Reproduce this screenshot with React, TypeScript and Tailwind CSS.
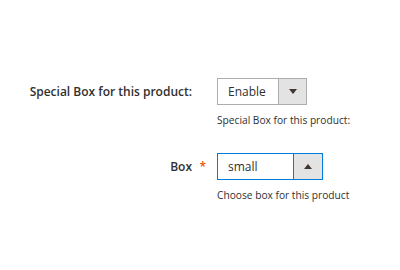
import React from "react";

const Arrow = ({ up }: { up?: boolean }) => (
  <svg width="8" height="5" viewBox="0 0 8 5" className="block">
    {up ? <path d="M0 5 L4 0 L8 5 Z" fill="#41362f" /> : <path d="M0 0 L8 0 L4 5 Z" fill="#41362f" />}
  </svg>
);

export default function App() {
  return (
    <div className="w-[400px] h-[270px] bg-white text-[#303030] font-['Open_Sans',sans-serif]">
      <div className="pt-[78px] flex flex-col gap-[26px]">
        {/* row 1 */}
        <div className="flex">
          <div className="w-[192px] h-[27px] flex items-center justify-end font-semibold text-[12px]">
            Special Box for this product:
          </div>
          <div className="ml-[25px] flex flex-col">
            <div className="flex w-[90px] h-[27px] border border-[#adadad]">
              <div className="flex-1 flex items-center pl-[10px] text-[12px]">Enable</div>
              <div className="w-[28px] border-l border-[#adadad] bg-[#e3e3e3] flex items-center justify-center">
                <Arrow />
              </div>
            </div>
            <div className="mt-[8px] text-[10.2px] leading-[14px]">Special Box for this product:</div>
          </div>
        </div>

        {/* row 2 */}
        <div className="flex">
          <div className="w-[192px] h-[27px] flex items-center justify-end font-semibold text-[12px] relative">
            Box
            <span className="absolute right-[-14px] top-[5px] text-[#eb5202] text-[12px]">*</span>
          </div>
          <div className="ml-[25px] flex flex-col">
            <div className="flex w-[106px] h-[27px] border border-[#007bdb]">
              <div className="flex-1 flex items-center pl-[10px] text-[12px]">small</div>
              <div className="w-[29px] border-l border-[#007bdb] bg-[#e3e3e3] flex items-center justify-center">
                <Arrow up />
              </div>
            </div>
            <div className="mt-[8px] text-[10.2px] leading-[14px]">Choose box for this product</div>
          </div>
        </div>
      </div>
    </div>
  );
}
